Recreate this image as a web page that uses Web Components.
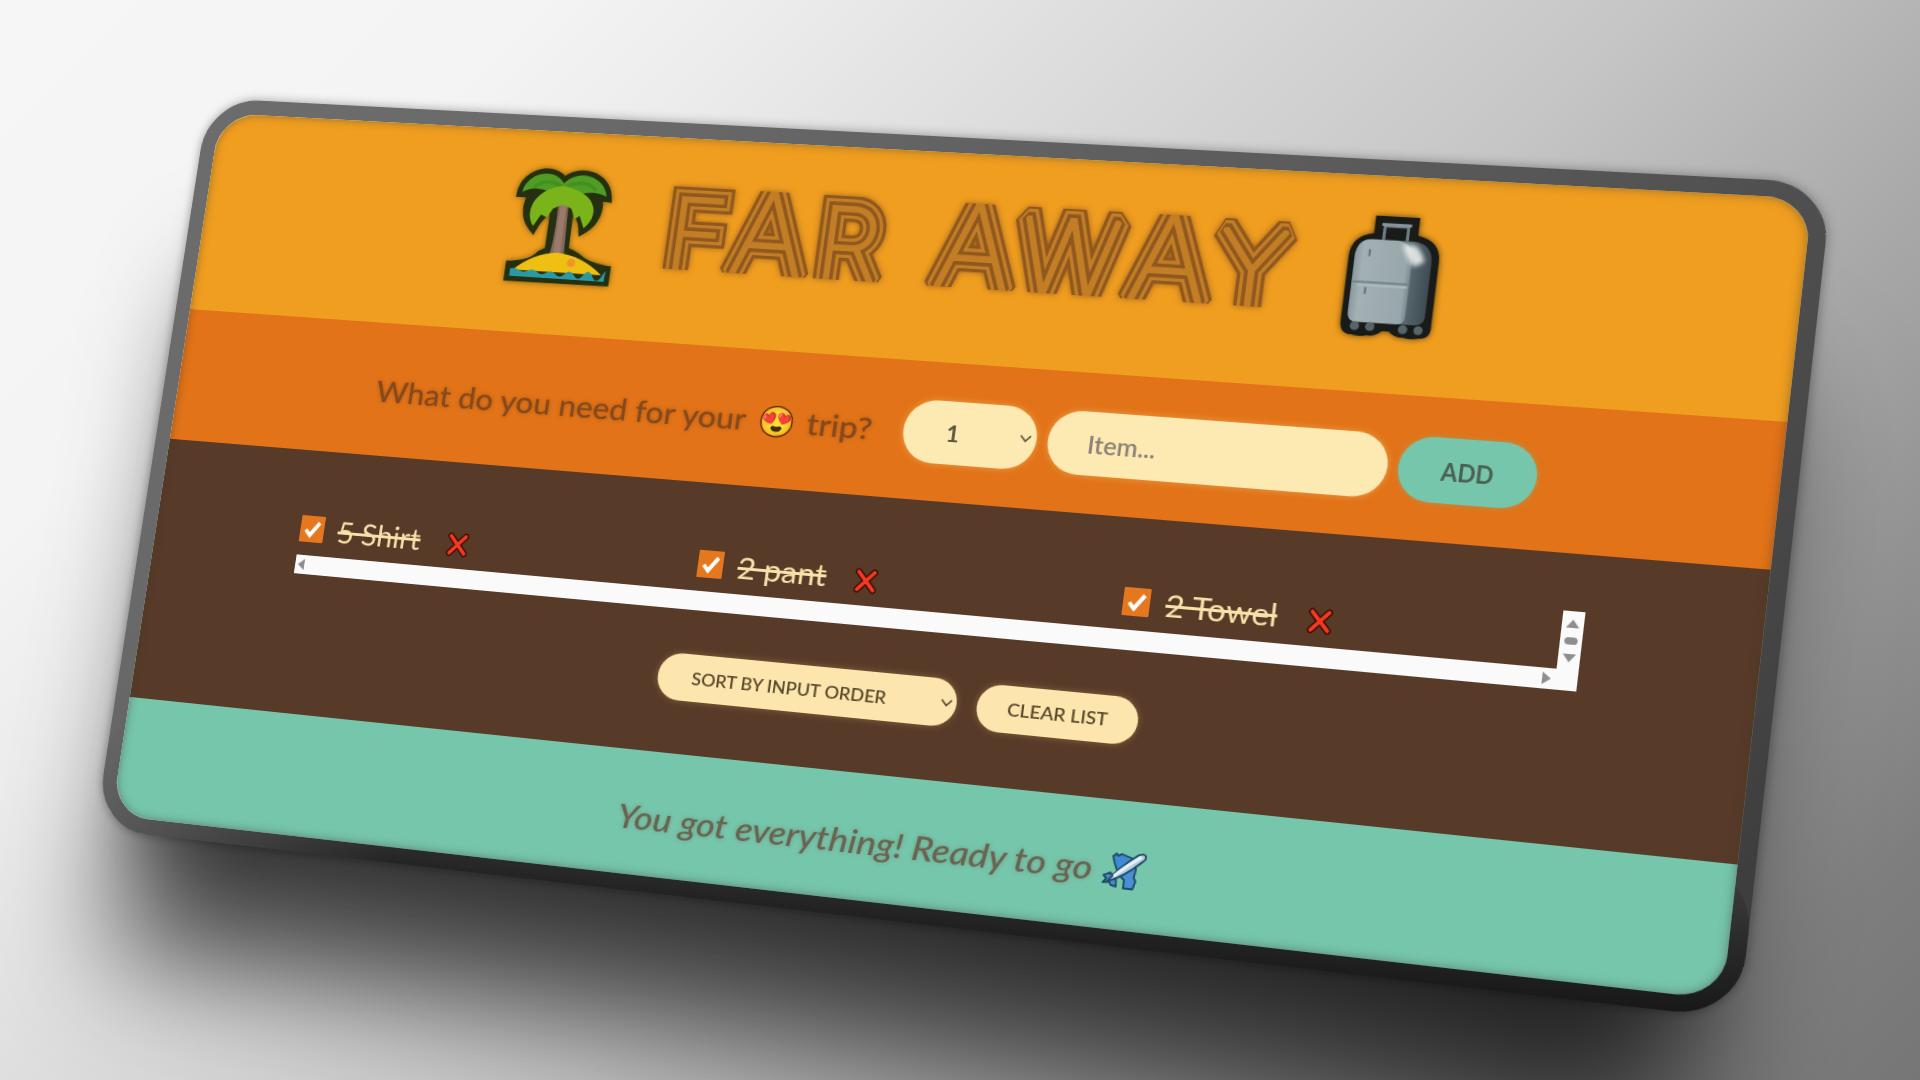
<!DOCTYPE html>
<html lang="en">
<head>
<meta charset="utf-8">
<title>Far Away</title>
<style>
html,body{margin:0;height:100%;overflow:hidden}
body{font-family:Lato,"Liberation Sans",sans-serif}
</style>
</head>
<body>
<far-stage>
  <far-card>
    <far-logo></far-logo>
    <far-form></far-form>
    <far-list></far-list>
    <far-stats></far-stats>
  </far-card>
</far-stage>
<script>
const define = (name, html, after) => customElements.define(name, class extends HTMLElement {
  connectedCallback() {
    if (this.shadowRoot) return;
    const t = document.createElement('template');
    t.innerHTML = html;
    this.attachShadow({mode: 'open'}).append(t.content.cloneNode(true));
    if (after) after(this);
  }
});

/* Text stretched to fill a given width. */
define('fit-text', `<style>
:host{display:inline-block;white-space:pre}
span{display:inline-block;transform-origin:0 50%}
:host([strike]) span{text-decoration:line-through;text-decoration-thickness:2.5px}
</style><span><slot></slot></span>`, el => {
  const w = +el.getAttribute('w'), s = el.shadowRoot.querySelector('span');
  s.style.transform = 'scaleX(' + (w / s.offsetWidth).toFixed(4) + ')';
  el.style.width = w + 'px';
});

define('far-stage', `<style>
:host{display:block;width:1920px;height:1080px;overflow:hidden;
 background:linear-gradient(135deg,#f6f6f6 0%,#f4f4f4 18%,#ececec 26%,#c6c6c6 54.7%,#adadad 68%,#9f9f9f 76%,#7e7e7e 92%,#767676 100%)}
.plane{display:flow-root;position:relative;width:1600px;height:760px;transform-origin:0 0;
 transform:matrix3d(.85974322,.038669882,0,-.000074598177,-.14599711,.90375895,0,-.000024283746,0,0,1,0,220.4,113.2,0,1)}
.shade{position:absolute;inset:-16px;border-radius:58px;
 box-shadow:0 165px 125px -40px rgba(0,0,0,.7),0 50px 60px -36px rgba(0,0,0,.25),0 0 11px rgba(0,0,0,.36)}
.shade::after{content:"";position:absolute;inset:auto 0 0 0;height:140px;border-radius:58px;
 background:linear-gradient(transparent,rgba(0,0,0,.66));-webkit-mask:linear-gradient(90deg,rgba(0,0,0,.15),#000 20%,#000 100%)}
</style><div class="plane"><div class="shade"></div><slot></slot></div>`);

define('far-card', `<style>
:host{display:flex;flex-direction:column;box-sizing:border-box;position:relative;width:1632px;height:792px;margin:-16px;
 border:16px solid rgba(8,8,8,.58);border-radius:58px;background-clip:padding-box}
.in{display:flex;flex-direction:column;height:760px;border-radius:42px;overflow:hidden;position:relative}
.in::after{content:"";position:absolute;inset:0;border-radius:42px;box-shadow:inset 0 0 10px rgba(60,60,40,.5);pointer-events:none}
</style><div class="in"><slot></slot></div>`);

define('palm-icon', `<style>:host{display:block;filter:drop-shadow(0 0 3px rgba(40,40,0,.6))}svg{display:block}</style>
<svg width="130" height="136" viewBox="-1 1 132 136" role="img" aria-label="Island">
<g fill="#24300f" stroke="#24300f" stroke-width="11">
<path d="M16 36C18 16 46 6 60 24C74 7 104 14 108 36L97 35C104 50 98 64 88 71C86 60 78 50 66 44L62 43C48 50 38 60 33 72C23 62 23 46 30 36Z"/>
<path d="M55 45L69 45L70 102L55 102Z"/><path d="M15 116Q38 114 46 103Q64 92 84 103Q96 113 118 115L118 126L15 127Z"/></g>
<path d="M57 42L68 42L71 104L55 104Q59 80 57 42Z" fill="#86685a"/>
<path d="M60 42L66 42L67 104L59 104Z" fill="#9a7b6b"/>
<path d="M16 36C18 16 46 6 60 24C74 7 104 14 108 36Q88 26 62 44Q36 24 16 36Z" fill="#4f9d22"/>
<path d="M28 30Q42 18 58 28M96 30Q84 18 64 27" stroke="#458f22" stroke-width="4" fill="none"/>
<path d="M33 72C22 58 28 36 52 29Q62 25 72 30C96 36 104 56 88 71L82 58L77 62L72 51L62 47L52 52L47 62L40 59Z" fill="#7ab41a"/>
<path d="M18 120Q38 101 64 99Q92 101 114 120Z" fill="#efbf12"/>
<circle cx="80" cy="109" r="4.5" fill="#f2932b"/>
<path d="M15 119q5-2 10 1t10 0 10 1 10 0 10 1 10-1 10 1 10-1 10 1 10-1 3 0V127H15Z" fill="#2a99a6"/>
</svg>`);

define('bag-icon', `<style>:host{display:block;filter:drop-shadow(0 0 3px rgba(20,20,0,.7))}svg{display:block}</style>
<svg width="112" height="137" viewBox="0 0 116 138" preserveAspectRatio="none" role="img" aria-label="Luggage">
<defs><linearGradient id="f" x2="1" y2="0"><stop stop-color="#8a9a9e"/><stop offset=".15" stop-color="#a3b0b4"/><stop offset=".9" stop-color="#98a7ab"/><stop offset="1" stop-color="#7b8a90"/></linearGradient>
<linearGradient id="s" x2="1"><stop stop-color="#6e7e86"/><stop offset=".6" stop-color="#64747c"/><stop offset="1" stop-color="#3f4b53"/></linearGradient></defs>
<path d="M37 9H80V27Q103 31 103 52V116Q104 129 92 129Q84 131 77 129Q69 130 63 124L56 124Q50 130 42 129Q34 131 27 129Q15 129 15 116V50Q16 30 37 27Z" fill="#191b19"/>
<path d="M47 33V19H70V33" fill="none" stroke="#6f7d83" stroke-width="3"/><path d="M44 17.5H73" stroke="#87949a" stroke-width="3"/>
<path d="M34 33H77Q96 35 96 54V108Q95 116 86 116H30Q21 116 21 107V50Q22 34 34 33Z" fill="url(#s)"/>
<path d="M36 33H62Q77 35 77 52V108Q77 116 69 116H30Q21 116 21 107V49Q22 34 36 33Z" fill="url(#f)"/>
<path d="M22 76H77" stroke="#71838a" stroke-width="2"/><path d="M27 79H75" stroke="#aebbbf" stroke-width="2"/>
<path d="M35 43v7M35 81v7" stroke="#667980" stroke-width="2.200"/>
<path d="M66 36L79 37Q87 44 89 53L79 58Q70 48 66 36Z" fill="#e9ecec" opacity=".9" style="filter:blur(2px)"/>
<g fill="#59646a"><circle cx="29" cy="120" r="4.500"/><circle cx="44" cy="120" r="4.500"/><circle cx="76" cy="121" r="4.500"/><circle cx="91" cy="121" r="4.500"/></g>
</svg>`);

define('plane-icon', `<style>:host{display:block}svg{display:block}</style>
<svg width="42" height="38" viewBox="1 0 42 38" role="img" aria-label="Plane">
<g stroke="#1f4a63" stroke-width="1.8" stroke-linejoin="round">
<path d="M9 6L12 3L14 5L17 3L27 6L27 13L15 21L11 12Z" fill="#3f8ad0"/>
<path d="M16 23L29 11L32 16L31 25L33 28L31 36L22 36L22 28Z" fill="#4790d6"/>
<path d="M2 25L8 22L14 26L15 35L10 34L8 31L2 32L5 28Z" fill="#4a8bc9"/>
<path d="M6 31Q15 17 33 2.500Q39 0 40 3Q41 6 37 9Q21 25 6 31Z" fill="#b4cfe6"/></g>
<path d="M12 25Q20 16 36 4" stroke="#eaf2f8" stroke-width="3" fill="none"/>
</svg>`);

define('far-logo', `<style>
:host{display:block;height:215px;background:#f09e20;box-sizing:border-box}
.row{display:flex;align-items:flex-start;gap:26px;padding:31px 0 0 329px}
bag-icon{margin-left:-9px}
svg{display:block;overflow:visible}
h1{margin:0;filter:drop-shadow(0 0 3px rgba(110,60,20,.6))}
text{font-family:Inter,Roboto,sans-serif;font-weight:100;font-size:103px;stroke-linejoin:miter;stroke-miterlimit:1.6}
.a{font-size:119px}.w{font-size:105px}
</style>
<div class="row"><palm-icon></palm-icon>
<h1><svg width="668" height="130" viewBox="486 31 668 130"><defs><clipPath id="c"><rect x="486" y="51" width="668" height="87"/></clipPath></defs>
<g clip-path="url(#c)"><g fill="#8f581f" stroke="#8f581f" stroke-width="24.500"><text id="t" y="138" xml:space="preserve">F<tspan class="a">A</tspan>R <tspan class="a">A</tspan><tspan class="w">W</tspan><tspan class="a">A</tspan><tspan class="w">Y</tspan></text></g></g>
</svg></h1><bag-icon></bag-icon></div>`, el => {
  const NS = 'http://www.w3.org/2000/svg', root = el.shadowRoot;
  const text = root.querySelector('text'), g = root.querySelector('h1 g');
  /* centre of each letter; F and R are set by their left edge */
  const mid = [null, 612.5, null, 752, 822.5, 917, 1015, 1095], left = {0: 507.5, 2: 664};
  text.setAttribute('x', mid.map((c, i) => c === null ? left[i] : (c - text.getSubStringLength(i, 1) / 2).toFixed(1)).join(' '));
  [['#c27d25', 18], ['#8f581f', 11.4], ['#c27d25', 4.2]].forEach(([c, w]) => {
    const u = document.createElementNS(NS, 'use');
    u.setAttribute('href', '#t');
    u.setAttribute('fill', c);
    u.setAttribute('stroke', c);
    u.setAttribute('stroke-width', w);
    g.append(u);
  });
});

define('far-form', `<style>
:host{display:flex;align-items:center;height:141px;box-sizing:border-box;padding-left:220px;background:#e27318;color:#84491c}
.q{display:flex;align-items:center;font-size:31px;font-weight:500;text-shadow:0 0 4px rgba(100,50,10,.35);line-height:40px;margin:2px 31px 0 0}
.e{width:62px;display:flex;justify-content:center;font-size:29px;line-height:42px;
 text-shadow:0 0 1px #2a1508,1px 0 1px #2a1508,-1px 0 1px #2a1508,0 1px 1px #2a1508,0 -1px 1px #2a1508}
.f{box-sizing:border-box;height:64px;border-radius:32px;background:#fde9b2;display:flex;align-items:center;font-size:25px;
 font-weight:700;color:#5e5440;box-shadow:0 0 7px rgba(253,225,150,.4)}
.n{width:133px;padding:0 5px 0 43px;justify-content:space-between;margin-right:11px;font-size:23px}
.i{width:326px;padding-left:39px;color:#8a8378;margin-right:10px;font-weight:600}
.b{width:128px;justify-content:center;background:#76c6ac;color:#4b6052;box-shadow:0 0 6px rgba(118,198,172,.4)}
svg{display:block}
</style>
<div class="q"><fit-text w="395">What do you need for your</fit-text><span class="e">😍</span><fit-text w="67">trip?</fit-text></div>
<div class="f n"><span>1</span><svg width="12" height="8" viewBox="0 0 12 8"><path d="M1 1L6 6.500L11 1" fill="none" stroke="#5e5440" stroke-width="1.8"/></svg></div>
<div class="f i"><fit-text w="67">Item...</fit-text></div>
<div class="f b"><fit-text w="48">ADD</fit-text></div>`);

define('pack-item', `<style>
:host{display:flex;flex:none;align-items:center;width:426px;height:30px}
.c{width:26px;height:28px;background:#e5771f;border-radius:1px;margin-right:15px}
.t{font-size:31px;font-weight:400;color:#f8e2a9;line-height:30px;display:block}
.x{margin:6px 0 0 28px}
svg{display:block}
</style><div class="c"><svg width="26" height="28" viewBox="0 0 26 28"><path d="M6 15L11 20.500L20.500 7" fill="none" stroke="#fff" stroke-width="4"/></svg></div>
<span class="t"><slot></slot></span>
<svg class="x" width="24" height="26" viewBox="0 0 24 26" role="img" aria-label="Remove"><path d="M4 4L20 22M20 4L4 22" stroke="#3b0d06" stroke-width="6.500" stroke-linecap="round"/><path d="M4 4L20 22M20 4L4 22" stroke="#f43a20" stroke-width="3.600" stroke-linecap="round"/></svg>`);

define('far-list', `<style>
:host{display:flex;flex-direction:column;height:278px;box-sizing:border-box;padding-top:55px;background:#583a29}
.ul{display:grid;grid-template-columns:1261px 20px;grid-template-rows:56px 20px;width:1281px;margin-left:160px}
.items{display:flex;padding-top:13px;overflow:hidden}
.v,.h{background:#fafafa;display:flex;align-items:center;justify-content:space-between}
.v{flex-direction:column;padding:8px 0 7px}
.v i{width:12px;height:7px;border-radius:4px;background:#8e8e8e}
.h{grid-column:1/3;padding:0 24px 0 3px}
svg{display:block}
.act{display:flex;align-items:center;gap:20px;margin:45px 0 0 561px}
.p{height:48px;box-sizing:border-box;border-radius:24px;background:#fce6ae;color:#5c4c2e;font-size:18px;font-weight:600;display:flex;align-items:center;box-shadow:0 0 7px rgba(230,200,110,.32)}
.s{width:303px;padding:0 4px 0 35px;justify-content:space-between}
.c{width:157px;height:47px;justify-content:center}
</style>
<div class="ul"><div class="items"><pack-item><fit-text strike w="91">5 Shirt</fit-text></pack-item><pack-item><fit-text strike w="91">2 pant</fit-text></pack-item><pack-item><fit-text strike w="107">2 Towel</fit-text></pack-item></div>
<div class="v"><svg width="12" height="8"><path d="M0 8L6 0L12 8Z" fill="#8e8e8e"/></svg><i></i><svg width="12" height="8"><path d="M0 0L6 8L12 0Z" fill="#8e8e8e"/></svg></div>
<div class="h"><svg width="7" height="12"><path d="M7 0L0 6L7 12Z" fill="#8e8e8e"/></svg><svg width="8" height="12"><path d="M0 0L8 6L0 12Z" fill="#8e8e8e"/></svg></div></div>
<div class="act"><div class="p s"><fit-text w="198">SORT BY INPUT ORDER</fit-text><svg width="12" height="8" viewBox="0 0 12 8"><path d="M1 1L6 6.500L11 1" fill="none" stroke="#5c4c2e" stroke-width="1.8"/></svg></div>
<div class="p c"><fit-text w="98">CLEAR LIST</fit-text></div></div>`);

define('far-stats', `<style>
:host{display:flex;align-items:center;gap:10px;height:126px;box-sizing:border-box;padding:9px 0 0 540px;background:#76c6ac;color:#6a6350;
 font-size:32px;font-weight:500;font-style:italic;text-shadow:0 0 4px rgba(90,80,60,.35)}
</style><fit-text w="476">You got everything! Ready to go</fit-text><plane-icon></plane-icon>`);
</script>
</body>
</html>
